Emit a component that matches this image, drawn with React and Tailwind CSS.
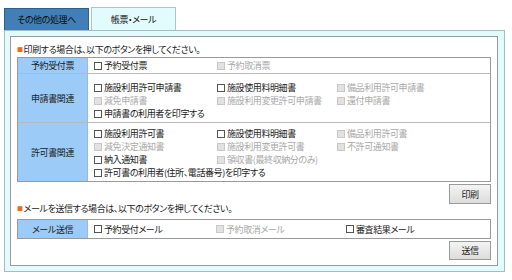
import React from "react";

const Cb = ({ label, disabled }) => (
  <div className={`flex items-center h-[13px] whitespace-nowrap ${disabled ? "text-[#a8a8a8]" : "text-[#1a1a1a]"}`}>
    <span
      className={`inline-block w-[8px] h-[8px] mr-[2px] border ${disabled ? "border-[#c8c8c8] bg-[#e2e2e2]" : "border-[#555] bg-white"}`}
    />
    <span>{label}</span>
  </div>
);

const Label = ({ children }) => (
  <div className="w-[70px] shrink-0 bg-[#9dcbf7] border-r border-[#a8b8c8] flex items-center justify-center text-[#1a1a1a]">
    {children}
  </div>
);

export default function App() {
  return (
    <div
      className="w-[512px] h-[280px] bg-white relative text-[9px] leading-[13px] tracking-[-0.4px] [font-feature-settings:'palt'] overflow-hidden"
      style={{ fontFamily: '"Noto Sans CJK JP", "Noto Sans", sans-serif' }}
    >
      <div className="pt-[7px] pl-[4px]">
        {/* Tabs */}
        <div className="flex items-end h-[23px]">
          <div className="w-[85px] h-[22px] bg-[#437fb7] border border-[#2f5f8a] border-b-0 flex items-center justify-center text-[#0a0a0a]">
            その他の処理へ
          </div>
          <div className="ml-[2px] w-[85px] h-[23px] bg-[#e2fbfd] border border-[#b0c4c8] border-b-0 flex items-center justify-center text-[#111]">
            帳票・メール
          </div>
        </div>
        {/* Panel */}
        <div className="w-[501px] h-[242px] bg-[#e2fbfd] border border-[#a6bcc2] p-[5px]">
          <div className="h-[230px] w-[488px] bg-white border border-[#9a9a9a] pl-[6px] pr-[6px]">
            <div className="h-[20px] flex items-end pb-[1px]">
              <span className="text-[#f06a1a] text-[6px] mr-[1px]">■</span>
              <span className="text-[#1a1a1a]">印刷する場合は、以下のボタンを押してください。</span>
            </div>
            <div className="w-[474px] border border-[#9a9a9a]">
              <div className="flex h-[16px] border-b border-[#b8b8b8]">
                <Label>予約受付票</Label>
                <div className="flex-1 pl-[6px] flex items-center">
                  <div className="w-[123px]"><Cb label="予約受付票" /></div>
                  <Cb label="予約取消票" disabled />
                </div>
              </div>
              <div className="flex h-[49px] border-b border-[#b8b8b8]">
                <Label>申請書関連</Label>
                <div className="flex-1 pl-[6px] pt-[7px]">
                  <div className="flex">
                    <div className="w-[123px]"><Cb label="施設利用許可申請書" /></div>
                    <div className="w-[120px]"><Cb label="施設使用料明細書" /></div>
                    <Cb label="備品利用許可申請書" disabled />
                  </div>
                  <div className="flex">
                    <div className="w-[123px]"><Cb label="減免申請書" disabled /></div>
                    <div className="w-[120px]"><Cb label="施設利用変更許可申請書" disabled /></div>
                    <Cb label="還付申請書" disabled />
                  </div>
                  <Cb label="申請書の利用者を印字する" />
                </div>
              </div>
              <div className="flex h-[58px]">
                <Label>許可書関連</Label>
                <div className="flex-1 pl-[6px] pt-[4px]">
                  <div className="flex">
                    <div className="w-[123px]"><Cb label="施設利用許可書" /></div>
                    <div className="w-[120px]"><Cb label="施設使用料明細書" /></div>
                    <Cb label="備品利用許可書" disabled />
                  </div>
                  <div className="flex">
                    <div className="w-[123px]"><Cb label="減免決定通知書" disabled /></div>
                    <div className="w-[120px]"><Cb label="施設利用変更許可書" disabled /></div>
                    <Cb label="不許可通知書" disabled />
                  </div>
                  <div className="flex">
                    <div className="w-[123px]"><Cb label="納入通知書" /></div>
                    <Cb label="領収書(最終収納分のみ)" disabled />
                  </div>
                  <Cb label="許可書の利用者(住所、電話番号)を印字する" />
                </div>
              </div>
            </div>
            <div className="flex justify-end w-[474px] mt-[2px]">
              <button className="w-[42px] h-[20px] border border-[#9a9a9a] bg-gradient-to-b from-[#f4f4f4] to-[#dcdcdc] text-[#222] text-[9px]">
                印刷
              </button>
            </div>
            <div className="h-[13px] flex items-center -mt-[2px] mb-[4px]">
              <span className="text-[#f06a1a] text-[6px] mr-[1px]">■</span>
              <span className="text-[#1a1a1a]">メールを送信する場合は、以下のボタンを押してください。</span>
            </div>
            <div className="w-[474px] h-[20px] border border-[#9a9a9a] flex">
              <Label>メール送信</Label>
              <div className="flex-1 pl-[6px] flex items-center">
                <div className="w-[122px]"><Cb label="予約受付メール" /></div>
                <div className="w-[130px]"><Cb label="予約取消メール" disabled /></div>
                <Cb label="審査結果メール" />
              </div>
            </div>
            <div className="flex justify-end w-[474px] mt-[2px]">
              <button className="w-[42px] h-[19px] border border-[#9a9a9a] bg-gradient-to-b from-[#f4f4f4] to-[#dcdcdc] text-[#222] text-[9px]">
                送信
              </button>
            </div>
          </div>
        </div>
      </div>
    </div>
  );
}
